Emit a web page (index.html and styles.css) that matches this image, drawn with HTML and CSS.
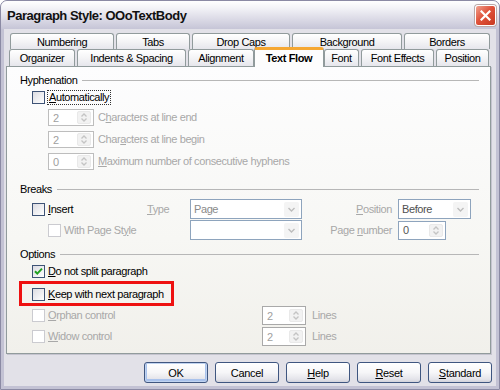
FILE: index.html
```html
<!DOCTYPE html>
<html lang="en">
<head>
    <meta charset="UTF-8">
    <meta name="viewport" content="width=device-width, initial-scale=1.0">
    <title>Paragraph Style: OOoTextBody</title>
    <link rel="stylesheet" href="styles.css">
</head>
<body>

    <div class="window">
        <div class="titlebar">
            <span class="title">Paragraph Style: OOoTextBody</span>
            <span class="close">
                <svg width="11" height="11" viewBox="0 0 11 11"><path d="M1.5 1.5 L9.5 9.5 M9.5 1.5 L1.5 9.5" stroke="#fff" stroke-width="2.2" stroke-linecap="square"/></svg>
            </span>
        </div>

        <div class="client">
            <div class="tab-row back">
                <div class="tab">Numbering</div>
                <div class="tab">Tabs</div>
                <div class="tab">Drop Caps</div>
                <div class="tab">Background</div>
                <div class="tab">Borders</div>
            </div>
            <div class="tab-row front">
                <div class="tab">Organizer</div>
                <div class="tab">Indents &amp; Spacing</div>
                <div class="tab">Alignment</div>
                <div class="tab active">Text Flow</div>
                <div class="tab">Font</div>
                <div class="tab">Font Effects</div>
                <div class="tab">Position</div>
            </div>

            <div class="panel">
                <!-- Hyphenation -->
                <div class="group-head">Hyphenation</div>
                <div class="row check-row first">
                    <span class="check"></span>
                    <span class="label focus"><u>A</u>utomatically</span>
                </div>
                <div class="row spin-row">
                    <span class="spin"><span>2</span><span class="spin-btn"></span></span>
                    <span class="label off">C<u>h</u>aracters at line end</span>
                </div>
                <div class="row spin-row">
                    <span class="spin"><span>2</span><span class="spin-btn"></span></span>
                    <span class="label off">Char<u>a</u>cters at line begin</span>
                </div>
                <div class="row spin-row">
                    <span class="spin"><span>0</span><span class="spin-btn"></span></span>
                    <span class="label off"><u>M</u>aximum number of consecutive hyphens</span>
                </div>

                <!-- Breaks -->
                <div class="group-head breaks">Breaks</div>
                <div class="breaks-grid">
                    <div class="row check-row">
                        <span class="check"></span>
                        <span class="label"><u>I</u>nsert</span>
                    </div>
                    <span class="label off"><u>T</u>ype</span>
                    <span class="select">Page<span class="drop-btn"></span></span>
                    <span class="label off right"><u>P</u>osition</span>
                    <span class="select dark">Before<span class="drop-btn"></span></span>

                    <div class="row check-row sub">
                        <span class="check off"></span>
                        <span class="label off">With Page St<u>y</u>le</span>
                    </div>
                    <span></span>
                    <span class="select"><span></span><span class="drop-btn"></span></span>
                    <span class="label off right">Page <u>n</u>umber</span>
                    <span class="spin blue"><span>0</span><span class="spin-btn"></span></span>
                </div>

                <!-- Options -->
                <div class="group-head options">Options</div>
                <div class="row check-row first">
                    <span class="check checked">
                        <svg width="11" height="11" viewBox="0 0 11 11"><path d="M2 5.2 L4.3 7.6 L9 2.6" fill="none" stroke="#21a121" stroke-width="2"/></svg>
                    </span>
                    <span class="label"><u>D</u>o not split paragraph</span>
                </div>
                <div class="highlight">
                    <div class="row check-row">
                        <span class="check"></span>
                        <span class="label"><u>K</u>eep with next paragraph</span>
                    </div>
                </div>
                <div class="options-grid">
                    <div class="row check-row">
                        <span class="check off"></span>
                        <span class="label off"><u>O</u>rphan control</span>
                    </div>
                    <span class="spin tall"><span>2</span><span class="spin-btn"></span></span>
                    <span class="label off">Lines</span>

                    <div class="row check-row">
                        <span class="check off"></span>
                        <span class="label off"><u>W</u>idow control</span>
                    </div>
                    <span class="spin tall"><span>2</span><span class="spin-btn"></span></span>
                    <span class="label off">Lines</span>
                </div>
            </div>

            <div class="buttons">
                <button class="default">OK</button>
                <button>Cancel</button>
                <button><u>H</u>elp</button>
                <button><u>R</u>eset</button>
                <button><u>S</u>tandard</button>
            </div>
        </div>
    </div>

</body>
</html>
```

FILE: styles.css
```css
* {
    margin: 0;
    padding: 0;
    box-sizing: border-box;
}
body {
    font-family: "Liberation Sans", Arial, sans-serif;
    font-size: 11px;
    letter-spacing: -0.4px;
    color: #000;
    background: #fff;
    width: 500px;
    height: 390px;
    overflow: hidden;
}
u {
    text-decoration: underline;
    text-underline-offset: 1px;
}

/* window frame */
.window {
    width: 500px;
    height: 390px;
    display: flex;
    flex-direction: column;
    border: 1px solid #8b8aa4;
    border-radius: 7px 7px 0 0;
    background: #c3c2d4;
    overflow: hidden;
}
.titlebar {
    height: 28px;
    flex: none;
    display: flex;
    align-items: center;
    justify-content: space-between;
    padding: 1px 3px 0 6px;
    background: linear-gradient(#ffffff, #f3f3f7 25%, #dedde8 60%, #c6c5d7);
}
.title {
    font-size: 13px;
    font-weight: bold;
    letter-spacing: -0.5px;
    color: #111;
}
.close {
    width: 21px;
    height: 21px;
    display: flex;
    align-items: center;
    justify-content: center;
    border: 1px solid #fff;
    border-radius: 3px;
    background: linear-gradient(135deg, #f0a28f, #e0533c 45%, #c8381f);
    box-shadow: 0 0 0 1px #b9a9a9;
}
.client {
    flex: 1;
    display: flex;
    flex-direction: column;
    margin: 0 3px 3px;
    background: #e2e1e8;
    padding-top: 4px;
}

/* tabs */
.tab-row {
    display: grid;
    gap: 2px;
}
.tab-row.back {
    grid-template-columns: 104px 74px 98px 110px 86px;
    height: 16px;
    margin-left: 6px;
}
.tab-row.front {
    grid-template-columns: 66px 109px 66px 66px 35px 73px 53px;
    height: 17px;
    margin-left: 5px;
}
.tab {
    display: flex;
    align-items: center;
    justify-content: center;
    border: 1px solid #919b9c;
    border-bottom: 0;
    border-radius: 3px 3px 0 0;
    background: linear-gradient(#ffffff, #f4f4f6 50%, #e6e6ec);
    white-space: nowrap;
}
.tab.active {
    position: relative;
    z-index: 1;
    margin: -2px -2px -1px;
    font-weight: bold;
    background: #fdfdfd;
    border-top: 3px solid #f5a733;
    padding-bottom: 1px;
}

/* panel */
.panel {
    height: 288px;
    margin: 0 5px 0 2px;
    border: 1px solid #919b9c;
    background: linear-gradient(#fdfdfe, #f7f7f4 60%, #f1f0eb);
    box-shadow: 1px 1px 0 #c5c4cf;
    padding: 7px 11px 0 13px;
}
.group-head {
    display: flex;
    align-items: center;
    gap: 5px;
    height: 13px;
    line-height: 13px;
}
.group-head::after {
    content: "";
    flex: 1;
    border-top: 1px solid #b7b7b7;
}
.group-head.breaks {
    margin-top: 13px;
}
.group-head.options {
    margin-top: 8px;
}
.row {
    display: flex;
    align-items: center;
    gap: 3px;
}
.check-row {
    height: 13px;
    padding-left: 12px;
}
.check-row.first {
    margin-top: 4px;
}
.check-row.sub {
    padding-left: 28px;
}
.spin-row {
    height: 17px;
    margin-top: 5px;
    padding-left: 28px;
    gap: 4px;
}
.spin-row:nth-of-type(2) {
    margin-top: 4px;
}
.label {
    white-space: nowrap;
    line-height: 13px;
}
.label.off {
    color: #a8a8a8;
}
.label.focus {
    outline: 1px dotted #333;
    padding: 0 1px;
}
.label.right {
    text-align: right;
    padding-right: 6px;
}
.check {
    width: 13px;
    height: 13px;
    flex: none;
    display: flex;
    align-items: center;
    justify-content: center;
    border: 1px solid #3e5376;
    background: linear-gradient(135deg, #dcdce2, #ffffff);
}
.check.off {
    border-color: #cbcbd0;
    background: #fff;
}

/* spin fields and list boxes */
.spin {
    width: 46px;
    height: 17px;
    flex: none;
    display: flex;
    align-items: center;
    justify-content: space-between;
    padding: 0 2px 0 4px;
    border: 1px solid #bdbdbd;
    background: #fff;
    color: #a0a0a0;
}
.spin.blue {
    width: 48px;
    height: 19px;
    border-color: #8ea4bd;
    color: #555;
}
.spin.tall {
    width: 44px;
    height: 19px;
    border-color: #a9a9a9;
}
.spin-btn {
    width: 14px;
    height: 13px;
    border: 1px solid #e9e9e9;
    border-radius: 2px;
    background: #f2f2f2 url("data:image/svg+xml,%3Csvg xmlns='http://www.w3.org/2000/svg' width='12' height='11'%3E%3Cpath d='M3.5 4.5 L6 2 L8.5 4.5 M3.5 6.5 L6 9 L8.5 6.5' fill='none' stroke='%23c4c4c4' stroke-width='1.3'/%3E%3C/svg%3E") center no-repeat;
}
.select {
    height: 20px;
    display: flex;
    align-items: center;
    justify-content: space-between;
    padding: 0 2px 0 3px;
    border: 1px solid #8ea4bd;
    background: #fff;
    color: #8a8a8a;
}
.select.dark {
    color: #505050;
}
.drop-btn {
    width: 15px;
    height: 15px;
    border-radius: 2px;
    background: #f4f4f4 url("data:image/svg+xml,%3Csvg xmlns='http://www.w3.org/2000/svg' width='15' height='15'%3E%3Cpath d='M4.5 6 L7.5 9 L10.5 6' fill='none' stroke='%23bdbdbd' stroke-width='1.4'/%3E%3C/svg%3E") center no-repeat;
}
.breaks-grid {
    display: grid;
    grid-template-columns: 127px 43px 112px 96px 73px;
    grid-template-rows: 20px 20px;
    row-gap: 1px;
    align-items: center;
    margin-top: 3px;
}
.breaks-grid .spin {
    height: 19px;
}

/* options */
.highlight {
    width: 155px;
    height: 25px;
    margin: 3px 0 0 -1px;
    padding: 4px 0 0 10px;
    border: 3px solid #ee1111;
}
.highlight .check-row {
    padding-left: 0;
}
.options-grid {
    display: grid;
    grid-template-columns: 236px 44px auto;
    grid-template-rows: 19px 19px;
    row-gap: 2px;
    column-gap: 6px;
    align-items: center;
}

/* buttons */
.buttons {
    display: flex;
    justify-content: flex-end;
    gap: 7px;
    padding: 8px 4px 0 0;
}
button {
    width: 64px;
    height: 21px;
    font-family: "Liberation Sans", Arial, sans-serif;
    font-size: 11px;
    letter-spacing: -0.3px;
    color: #000;
    border: 1px solid #3f5680;
    border-radius: 3px;
    background: linear-gradient(#ffffff, #f6f6f8 50%, #e4e4ea 85%, #d2d2da);
}
button.default {
    box-shadow: inset 0 0 0 1px #c0d3f0, inset 0 -1px 0 2px #a9c2ec;
}
```
